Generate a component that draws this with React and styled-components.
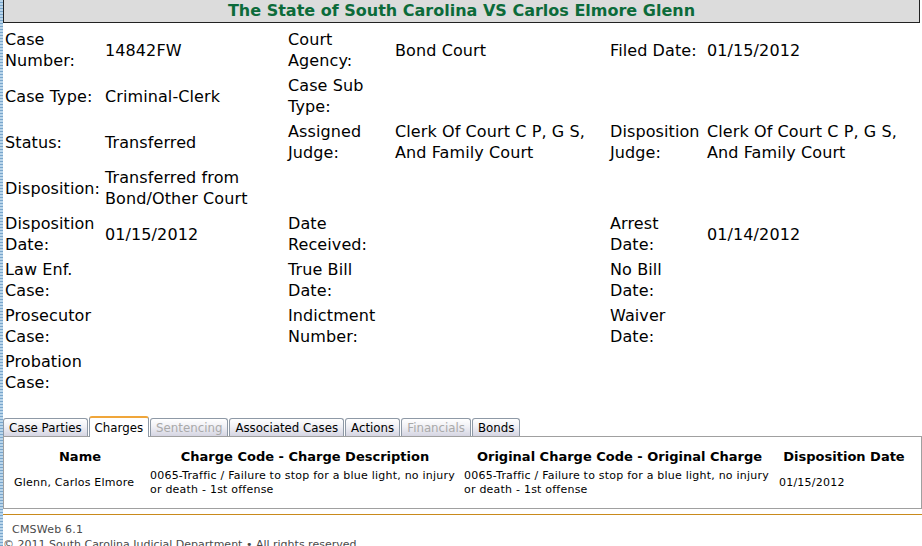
import React from 'react'
import styled, { createGlobalStyle } from 'styled-components'

const GlobalStyle = createGlobalStyle`
    html, body {
        margin: 0;
        padding: 0;
    }
    body {
        background-color: #9cc0de;
        background-image: repeating-linear-gradient(0deg, #7aa6cc 0px, #7aa6cc 1px, #b9d5ea 1px, #b9d5ea 3px);
        font-family: "DejaVu Sans", Verdana, sans-serif;
        color: #000;
    }
`;

const caseInfo = [
    [['Case Number:', '14842FW'], ['Court Agency:', 'Bond Court'], ['Filed Date:', '01/15/2012']],
    [['Case Type:', 'Criminal-Clerk'], ['Case Sub Type:', ''], ['', '']],
    [['Status:', 'Transferred'], ['Assigned Judge:', 'Clerk Of Court C P, G S, And Family Court'], ['Disposition Judge:', 'Clerk Of Court C P, G S, And Family Court']],
    [['Disposition:', 'Transferred from Bond/Other Court'], ['', ''], ['', '']],
    [['Disposition Date:', '01/15/2012'], ['Date Received:', ''], ['Arrest Date:', '01/14/2012']],
    [['Law Enf. Case:', ''], ['True Bill Date:', ''], ['No Bill Date:', '']],
    [['Prosecutor Case:', ''], ['Indictment Number:', ''], ['Waiver Date:', '']],
    [['Probation Case:', ''], ['', ''], ['', '']],
];

const tabs = [
    { label: 'Case Parties' },
    { label: 'Charges', active: true },
    { label: 'Sentencing', disabled: true },
    { label: 'Associated Cases' },
    { label: 'Actions' },
    { label: 'Financials', disabled: true },
    { label: 'Bonds' },
];

const charges = [
    {
        name: 'Glenn, Carlos Elmore',
        charge: '0065-Traffic / Failure to stop for a blue light, no injury or death - 1st offense',
        original: '0065-Traffic / Failure to stop for a blue light, no injury or death - 1st offense',
        date: '01/15/2012'
    }
];

export default function App() {
    return (
        <Page>
            <GlobalStyle />
            <Title>The State of South Carolina VS Carlos Elmore Glenn</Title>
            <InfoGrid>
                {caseInfo.map((row, i) =>
                    row.map(([label, value], j) => (
                        <React.Fragment key={i + '-' + j}>
                            <Cell>{label}</Cell>
                            <Cell>{value}</Cell>
                        </React.Fragment>
                    ))
                )}
            </InfoGrid>

            <TabBar>
                {tabs.map(t => (
                    <Tab key={t.label} $active={t.active} $disabled={t.disabled}>{t.label}</Tab>
                ))}
            </TabBar>
            <Panel>
                <ChargeGrid>
                    <HeadCell>Name</HeadCell>
                    <HeadCell>Charge Code - Charge Description</HeadCell>
                    <HeadCell>Original Charge Code - Original Charge</HeadCell>
                    <HeadCell>Disposition Date</HeadCell>
                    {charges.map((c, i) => (
                        <React.Fragment key={i}>
                            <DataCell>{c.name}</DataCell>
                            <DataCell>{c.charge}</DataCell>
                            <DataCell>{c.original}</DataCell>
                            <DataCell>{c.date}</DataCell>
                        </React.Fragment>
                    ))}
                </ChargeGrid>
            </Panel>

            <Rule />
            <Footer>
                <Version>CMSWeb 6.1</Version>
                <Copyright>© 2011 South Carolina Judicial Department • All rights reserved</Copyright>
            </Footer>
        </Page>
    )
}

const Page = styled.div`
    margin-left: 3px;
    width: 919px;
    min-height: 100vh;
    background: #fff;
    overflow: hidden;
`;

const Title = styled.h1`
    margin: 0;
    width: 917px;
    box-sizing: border-box;
    height: 23px;
    border: 1px solid #222;
    border-top: none;
    background: #dcdcdc;
    color: #0c6b3a;
    font-size: 16px;
    font-weight: bold;
    line-height: 22px;
    text-align: center;
`;

const InfoGrid = styled.div`
    margin-top: 4px;
    display: grid;
    grid-template-columns: 100px 183px 107px 215px 97px 217px;
    grid-auto-rows: 46px;
    align-items: center;
`;

const Cell = styled.div`
    padding: 0 2px;
    font-size: 16px;
    line-height: 21px;
    letter-spacing: 0.1px;
`;

const TabBar = styled.div`
    margin-top: 21px;
    display: flex;
    align-items: flex-end;
    gap: 1px;
    height: 20px;
`;

const Tab = styled.div`
    position: relative;
    z-index: ${p => p.$active ? 1 : 0};
    box-sizing: border-box;
    height: ${p => p.$active ? '21px' : '18px'};
    margin-bottom: ${p => p.$active ? '-1px' : '0'};
    padding: ${p => p.$active ? '3px 5px 0' : '2px 5px 0'};
    border: 1px solid #8e99a6;
    border-top: ${p => p.$active ? '2px solid #f0a63a' : '1px solid #8e99a6'};
    border-bottom: none;
    border-radius: 3px 3px 0 0;
    background: ${p => p.$active ? '#fff' : 'linear-gradient(#ffffff, #f0f0f5 45%, #d5d5e2)'};
    color: ${p => p.$disabled ? '#a9a9a9' : '#000'};
    font-size: 11.8px;
    line-height: 14px;
    white-space: nowrap;
    cursor: ${p => p.$disabled ? 'default' : 'pointer'};
`;

const Panel = styled.div`
    box-sizing: border-box;
    width: 919px;
    border: 1px solid #a0a0a0;
    padding: 10px 8px 9px;
`;

const ChargeGrid = styled.div`
    display: grid;
    grid-template-columns: 136px 314px 315px 134px;
    align-items: center;
`;

const HeadCell = styled.div`
    padding: 2px;
    font-size: 13px;
    font-weight: bold;
    line-height: 16px;
    text-align: center;
`;

const DataCell = styled.div`
    padding: 2px;
    font-size: 11px;
    line-height: 14px;
    letter-spacing: 0.22px;
`;

const Rule = styled.div`
    margin-top: 5px;
    height: 1px;
    background: #c98a1b;
`;

const Footer = styled.div`
    padding-top: 7px;
    font-size: 11px;
    line-height: 15px;
    color: #4a4a4a;
`;

const Version = styled.div`
    padding-left: 9px;
    letter-spacing: 0.2px;
`;

const Copyright = styled.div``;
